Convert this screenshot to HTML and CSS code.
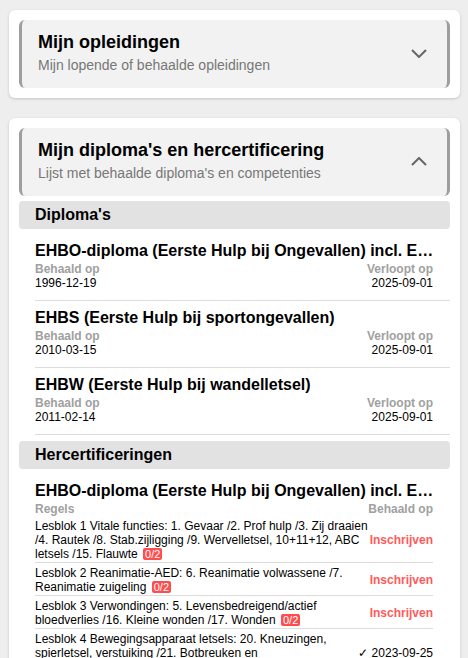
FILE: index.html
```html
<!DOCTYPE html>
<html lang="nl">
<head>
    <meta charset="UTF-8">
    <title>Mijn dossier</title>
    <link rel="stylesheet" href="styles.css">
</head>
<body>
    <div class="card">
        <div class="card-head">
            <div>
                <div class="card-title">Mijn opleidingen</div>
                <div class="card-sub">Mijn lopende of behaalde opleidingen</div>
            </div>
            <svg class="chevron" width="16" height="9" viewBox="0 0 16 9"><path d="M1 1 L8 8 L15 1" fill="none" stroke="#666" stroke-width="2"/></svg>
        </div>
    </div>

    <div class="card">
        <div class="card-head">
            <div>
                <div class="card-title">Mijn diploma's en hercertificering</div>
                <div class="card-sub">Lijst met behaalde diploma's en competenties</div>
            </div>
            <svg class="chevron" width="16" height="9" viewBox="0 0 16 9"><path d="M1 8 L8 1 L15 8" fill="none" stroke="#666" stroke-width="2"/></svg>
        </div>

        <div class="section-bar">Diploma's</div>

        <div class="diploma">
            <div class="item-title">EHBO-diploma (Eerste Hulp bij Ongevallen) incl. EHBO-AED</div>
            <div class="meta">
                <div>
                    <div class="label">Behaald op</div>
                    <div class="value">1996-12-19</div>
                </div>
                <div class="right">
                    <div class="label">Verloopt op</div>
                    <div class="value">2025-09-01</div>
                </div>
            </div>
        </div>
        <div class="diploma">
            <div class="item-title">EHBS (Eerste Hulp bij sportongevallen)</div>
            <div class="meta">
                <div>
                    <div class="label">Behaald op</div>
                    <div class="value">2010-03-15</div>
                </div>
                <div class="right">
                    <div class="label">Verloopt op</div>
                    <div class="value">2025-09-01</div>
                </div>
            </div>
        </div>
        <div class="diploma">
            <div class="item-title">EHBW (Eerste Hulp bij wandelletsel)</div>
            <div class="meta">
                <div>
                    <div class="label">Behaald op</div>
                    <div class="value">2011-02-14</div>
                </div>
                <div class="right">
                    <div class="label">Verloopt op</div>
                    <div class="value">2025-09-01</div>
                </div>
            </div>
        </div>

        <div class="section-bar">Hercertificeringen</div>

        <div class="recert">
            <div class="item-title">EHBO-diploma (Eerste Hulp bij Ongevallen) incl. EHBO-AED</div>
            <div class="meta">
                <div class="label">Regels</div>
                <div class="label">Behaald op</div>
            </div>
            <div class="rule">
                <div class="rule-text">Lesblok 1 Vitale functies: 1. Gevaar /2. Prof hulp /3. Zij draaien /4. Rautek /8. Stab.zijligging /9. Wervelletsel, 10+11+12, ABC letsels /15. Flauwte <span class="badge">0/2</span></div>
                <div class="rule-action">Inschrijven</div>
            </div>
            <div class="rule">
                <div class="rule-text">Lesblok 2 Reanimatie-AED: 6. Reanimatie volwassene /7. Reanimatie zuigeling <span class="badge">0/2</span></div>
                <div class="rule-action">Inschrijven</div>
            </div>
            <div class="rule">
                <div class="rule-text">Lesblok 3 Verwondingen: 5. Levensbedreigend/actief bloedverlies /16. Kleine wonden /17. Wonden <span class="badge">0/2</span></div>
                <div class="rule-action">Inschrijven</div>
            </div>
            <div class="rule">
                <div class="rule-text">Lesblok 4 Bewegingsapparaat letsels: 20. Kneuzingen, spierletsel, verstuiking /21. Botbreuken en ontwrichtingen/luxaties /22. Brandwonden</div>
                <div class="rule-done">✓ 2023-09-25</div>
            </div>
        </div>
    </div>
</body>
</html>
```

FILE: styles.css
```css
body {
    font-family: "Liberation Sans", Arial, sans-serif;
    margin: 0;
    padding: 10px 8px 0 9px;
    background-color: #eeeeee;
    color: #000;
}
.card {
    background-color: #fff;
    border-radius: 6px;
    box-shadow: 0 1px 3px rgba(0,0,0,0.18);
    padding: 10px;
    margin-bottom: 20px;
}
.card-head {
    display: flex;
    align-items: center;
    justify-content: space-between;
    background-color: #f2f2f2;
    border-left: 3px solid #9e9e9e;
    border-right: 3px solid #9e9e9e;
    border-radius: 6px;
    padding: 11px 20px 14px 16px;
}
.card-title {
    font-size: 18px;
    font-weight: bold;
    line-height: 22px;
}
.card-sub {
    font-size: 14px;
    line-height: 17px;
    color: #777;
    margin-top: 4px;
}
.chevron {
    display: block;
    margin-top: 1px;
}
.section-bar {
    background-color: #e2e2e2;
    border-radius: 4px;
    font-size: 16px;
    font-weight: bold;
    line-height: 28px;
    padding: 0 16px;
    margin: 5px 0 5px;
}
.diploma + .section-bar {
    margin-top: 6px;
}
.diploma {
    margin-left: 16px;
    padding: 8px 17px 10px 0;
    border-bottom: 1px solid #dddddd;
}
.item-title {
    font-size: 16px;
    font-weight: bold;
    line-height: 18px;
    margin-bottom: 2px;
    margin-right: -6px;
    white-space: nowrap;
    overflow: hidden;
    text-overflow: ellipsis;
}
.meta {
    display: flex;
    justify-content: space-between;
}
.right {
    text-align: right;
}
.label {
    font-size: 12px;
    font-weight: bold;
    line-height: 14px;
    color: #a0a0a0;
}
.value {
    font-size: 12px;
    line-height: 14px;
}
.recert {
    padding: 8px 17px 0 16px;
}
.rule {
    display: flex;
    align-items: center;
    padding: 3px 0 1px;
    border-bottom: 1px solid #dddddd;
    font-size: 12px;
    line-height: 14px;
}
.rule:first-of-type {
    padding-top: 2px;
}
.rule-text {
    flex: 1;
}
.rule-action {
    color: #ff5a5a;
    font-weight: bold;
    text-align: right;
}
.rule-done {
    color: #000;
    text-align: right;
    padding-left: 8px;
}
.badge {
    display: inline-block;
    background-color: #ff4d4d;
    color: #fff;
    font-size: 11px;
    line-height: 12px;
    padding: 0 2px;
    border-radius: 2px;
    margin-left: 2px;
}
```
